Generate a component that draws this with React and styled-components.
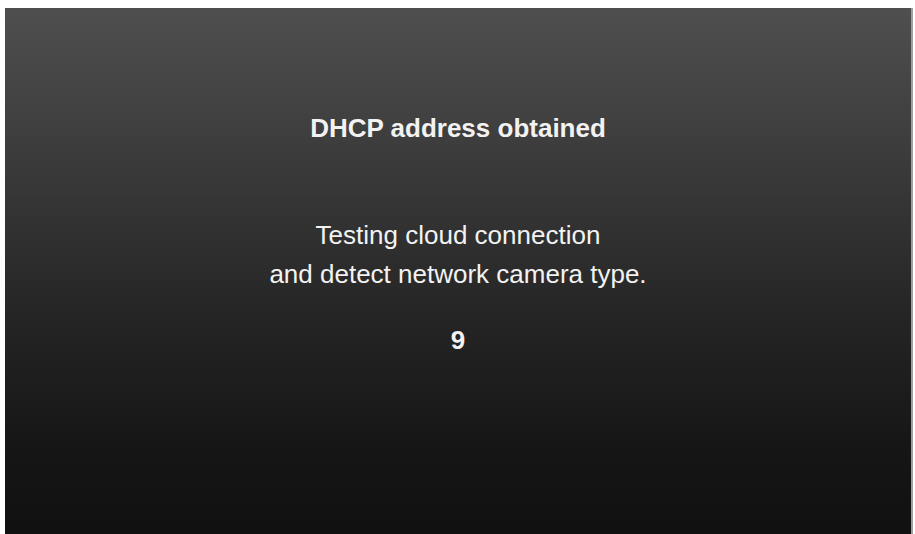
import React from "react";
import styled, { createGlobalStyle } from "styled-components";

const GlobalStyle = createGlobalStyle`
  html, body {
    margin: 0;
    padding: 0;
    background: #ffffff;
  }
  body {
    font-family: "Liberation Sans", Arial, sans-serif;
  }
`;

const Screen = styled.div`
  box-sizing: border-box;
  margin: 8px 2px 0 5px;
  height: 526px;
  padding-top: 105px;
  display: flex;
  flex-direction: column;
  align-items: center;
  color: #f2f2f2;
  background: linear-gradient(180deg, #4f4f4f 0%, #3a3a3a 30%, #242424 60%, #151515 85%, #111111 100%);
  border-right: 2px solid #a0a0a0;
`;

const Title = styled.div`
  font-size: 26px;
  font-weight: bold;
  line-height: 30px;
`;

const Message = styled.div`
  margin-top: 73px;
  font-size: 26px;
  line-height: 39px;
  text-align: center;
`;

const Countdown = styled.div`
  margin-top: 31px;
  font-size: 26px;
  font-weight: bold;
  line-height: 30px;
`;

export default function App() {
  return (
    <>
      <GlobalStyle />
      <Screen>
        <Title>DHCP address obtained</Title>
        <Message>
          Testing cloud connection
          <br />
          and detect network camera type.
        </Message>
        <Countdown>9</Countdown>
      </Screen>
    </>
  );
}
